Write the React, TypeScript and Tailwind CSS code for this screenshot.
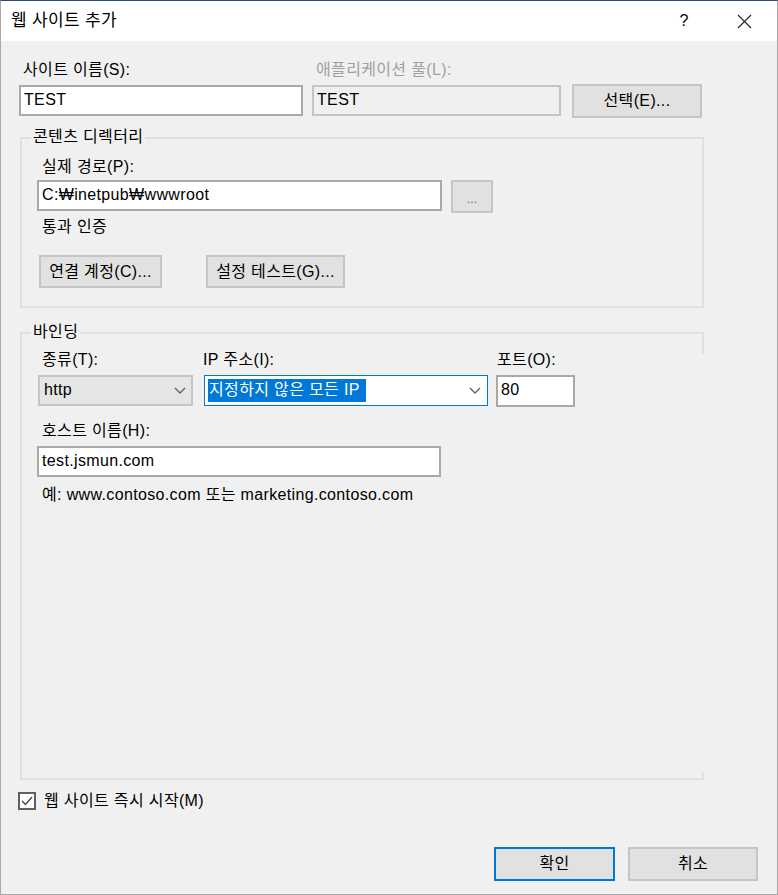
import type { ReactNode } from "react"

const font = "font-['Liberation_Sans','Noto_Sans_CJK_KR',sans-serif]"

function Label({ children, className = "", disabled = false }: { children: ReactNode; className?: string; disabled?: boolean }) {
  return (
    <div className={`h-[20px] leading-[20px] whitespace-nowrap ${disabled ? "text-[#a0a0a0]" : "text-black"} ${className}`}>
      {children}
    </div>
  )
}

function TextBox({ value, className = "", disabled = false }: { value: string; className?: string; disabled?: boolean }) {
  return (
    <div
      className={`flex items-center border-2 px-[3px] ${
        disabled ? "bg-[#f0f0f0] border-[#c4c4c4]" : "bg-white border-[#a9a9a9]"
      } ${className}`}
    >
      <span className="whitespace-nowrap leading-none -mt-[2px]">{value}</span>
    </div>
  )
}

function WinButton({ children, className = "", primary = false }: { children: ReactNode; className?: string; primary?: boolean }) {
  return (
    <button
      className={`flex items-center justify-center bg-[#e1e1e1] border-2 ${
        primary ? "border-[#0078d7]" : "border-[#c5c5c5]"
      } whitespace-nowrap ${className}`}
    >
      {children}
    </button>
  )
}

function Chevron() {
  return (
    <svg width="12" height="7" viewBox="0 0 12 7" className="shrink-0">
      <path d="M1 1 L6 6 L11 1" fill="none" stroke="#606060" strokeWidth="1.3" />
    </svg>
  )
}

function GroupBox({
  title,
  className = "",
  partialRight = false,
  children,
}: {
  title: string
  className?: string
  partialRight?: boolean
  children: ReactNode
}) {
  return (
    <div
      className={`relative ml-[1px] w-[684px] border-2 border-[#e0e0e0] ${partialRight ? "border-r-transparent" : ""} ${className}`}
    >
      <div className="absolute -top-[12px] left-[9px] bg-[#f0f0f0] px-[2px] h-[20px] leading-[20px]">{title}</div>
      {partialRight && (
        <>
          {/* right edge only repainted near the corners */}
          <div className="absolute -top-[2px] -right-[2px] w-[2px] h-[22px] bg-[#e0e0e0]" />
          <div className="absolute -bottom-[2px] -right-[2px] w-[2px] h-[8px] bg-[#e0e0e0]" />
        </>
      )}
      {children}
    </div>
  )
}

export default function App() {
  return (
    <div
      className={`w-[778px] h-[895px] bg-[#f0f0f0] border border-[#a8a8a8] border-t-[#2b4a6c] flex flex-col text-[16px] tracking-[0.35px] text-black ${font}`}
    >
      {/* title bar */}
      <div className="h-[40px] bg-white flex items-center shrink-0">
        <span className="pl-[10px] text-[17px]">웹 사이트 추가</span>
        <div className="ml-auto flex items-center pr-[10px]">
          <span className="w-[46px] text-center text-[16px]">?</span>
          <span className="w-[46px] ml-[14px] flex justify-center">
            <svg width="15" height="15" viewBox="0 0 15 15">
              <path d="M1 1 L14 14 M14 1 L1 14" stroke="#222" strokeWidth="1.1" />
            </svg>
          </span>
        </div>
      </div>

      <div className="flex flex-col px-[18px]">
        {/* site name row */}
        <div className="flex items-start mt-[19px]">
          <div className="w-[284px] flex flex-col">
            <Label className="pl-[4px]">사이트 이름(S):</Label>
            <TextBox value="TEST" className="mt-[5px] h-[31px]" />
          </div>
          <div className="w-[249px] ml-[9px] flex flex-col">
            <Label className="pl-[4px]" disabled>
              애플리케이션 풀(L):
            </Label>
            <TextBox value="TEST" className="mt-[5px] h-[31px]" disabled />
          </div>
          <WinButton className="ml-[11px] mt-[24px] w-[130px] h-[34px]">선택(E)...</WinButton>
        </div>

        {/* content directory */}
        <GroupBox title="콘텐츠 디렉터리" className="mt-[19px] h-[171px]">
          <div className="flex flex-col pt-[18px] pl-[15px]">
            <Label className="pl-[5px]">실제 경로(P):</Label>
            <div className="flex items-start mt-[3px]">
              <TextBox value="C:₩inetpub₩wwwroot" className="w-[405px] h-[31px]" />
              <WinButton className="ml-[9px] w-[42px] h-[33px] text-[#6a6a8a] text-[12px] tracking-normal pt-[4px]">...</WinButton>
            </div>
            <Label className="pl-[5px] mt-[4px]">통과 인증</Label>
            <div className="flex mt-[18px]">
              <WinButton className="ml-[2px] w-[123px] h-[33px]">연결 계정(C)...</WinButton>
              <WinButton className="ml-[44px] w-[139px] h-[33px]">설정 테스트(G)...</WinButton>
            </div>
          </div>
        </GroupBox>

        {/* binding */}
        <GroupBox title="바인딩" partialRight className="mt-[24px] h-[448px]">
          <div className="flex flex-col pt-[16px] pl-[16px]">
            <div className="flex items-start">
              <div className="w-[155px] flex flex-col">
                <Label className="pl-[4px]">종류(T):</Label>
                <div className="mt-[5px] h-[31px] bg-[#e5e5e5] border-2 border-[#c5c5c5] flex items-center justify-between pl-[4px] pr-[5px]">
                  <span className="-mt-[2px]">http</span>
                  <Chevron />
                </div>
              </div>
              <div className="w-[284px] ml-[11px] flex flex-col">
                <Label className="-ml-[1px]">IP 주소(I):</Label>
                <div className="mt-[5px] h-[31px] bg-white border border-[#0078d7] flex items-center justify-between pl-[3px] pr-[6px]">
                  <span className="bg-[#0078d7] text-white h-[23px] leading-[22px] pl-[1px] pr-[6px] whitespace-nowrap">
                    지정하지 않은 모든 IP
                  </span>
                  <Chevron />
                </div>
              </div>
              <div className="w-[79px] ml-[8px] flex flex-col">
                <Label className="pl-[1px]">포트(O):</Label>
                <TextBox value="80" className="mt-[5px] h-[32px]" />
              </div>
            </div>
            <Label className="pl-[4px] mt-[14px]">호스트 이름(H):</Label>
            <TextBox value="test.jsmun.com" className="mt-[5px] -ml-[1px] w-[404px] h-[31px]" />
            <Label className="pl-[4px] mt-[8px]">예: www.contoso.com 또는 marketing.contoso.com</Label>
          </div>
        </GroupBox>

        {/* start checkbox */}
        <div className="flex items-center mt-[11px] -ml-[1px]">
          <div className="w-[18px] h-[18px] border-2 border-[#5f5f5f] bg-white flex items-center justify-center">
            <svg width="14" height="14" viewBox="0 0 14 14">
              <path d="M2 7 L5.5 10.5 L12 3" fill="none" stroke="#444" strokeWidth="1.4" />
            </svg>
          </div>
          <span className="ml-[8px] leading-[20px]">웹 사이트 즉시 시작(M)</span>
        </div>

        {/* dialog buttons */}
        <div className="flex mt-[36px]">
          <WinButton primary className="ml-[475px] w-[121px] h-[34px]">
            확인
          </WinButton>
          <WinButton className="ml-[13px] w-[130px] h-[34px]">취소</WinButton>
        </div>
      </div>
    </div>
  )
}
